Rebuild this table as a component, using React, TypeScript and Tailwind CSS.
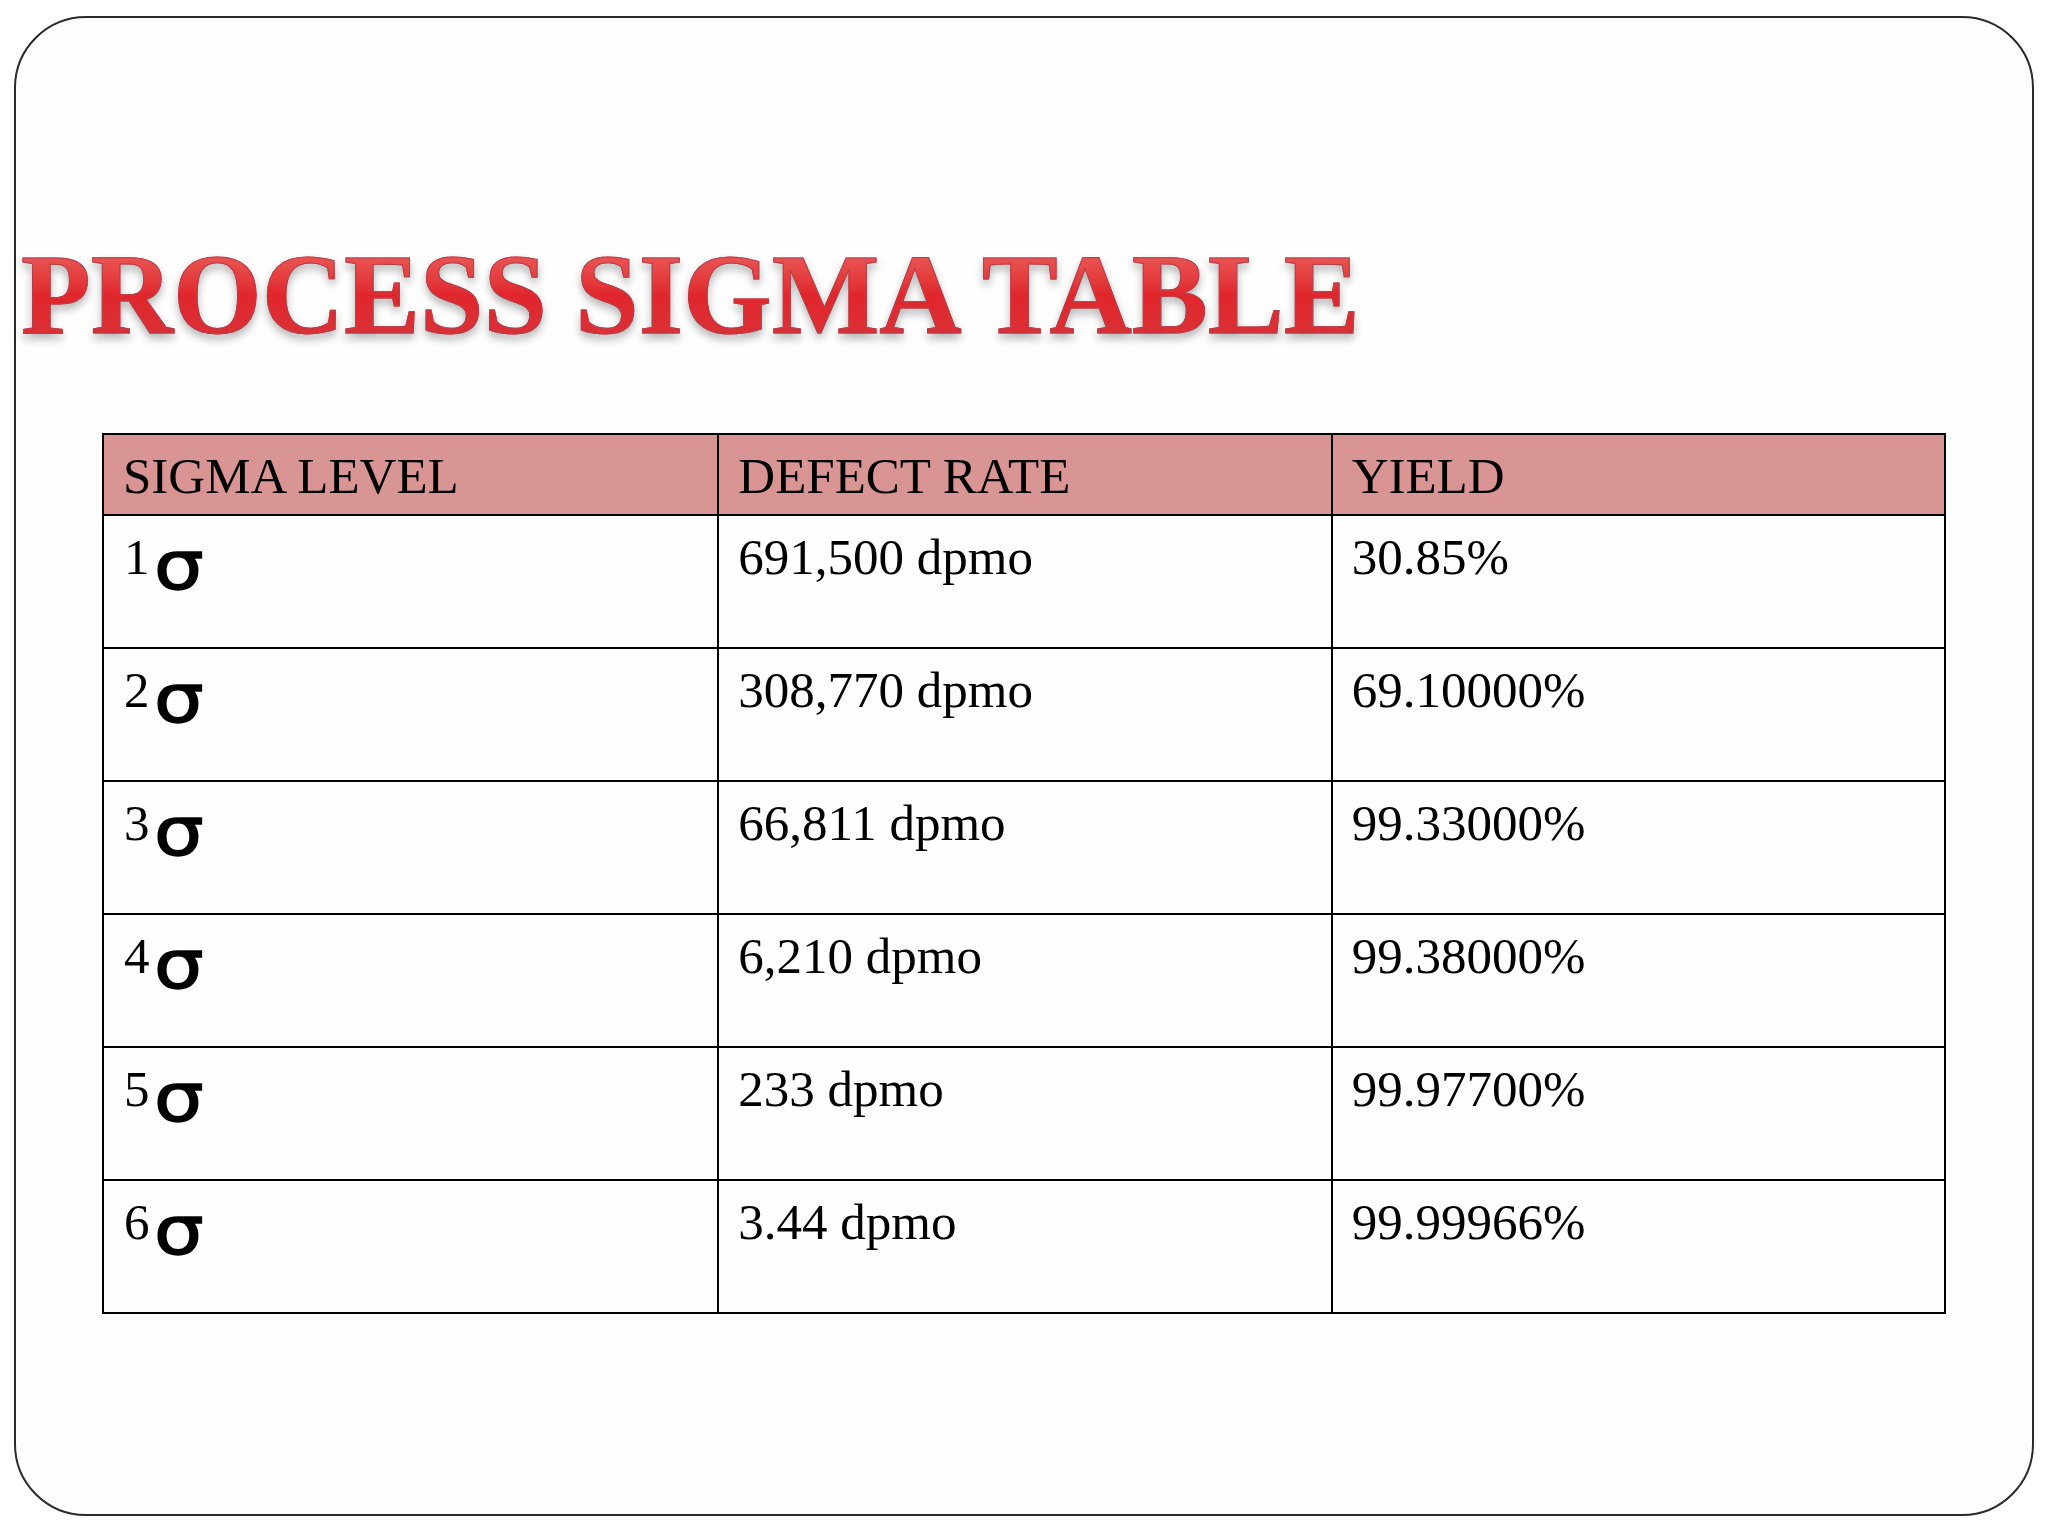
const rows = [
  { level: "1", defects: "691,500 dpmo", yieldPct: "30.85%" },
  { level: "2", defects: "308,770 dpmo", yieldPct: "69.10000%" },
  { level: "3", defects: "66,811 dpmo", yieldPct: "99.33000%" },
  { level: "4", defects: "6,210 dpmo", yieldPct: "99.38000%" },
  { level: "5", defects: "233 dpmo", yieldPct: "99.97700%" },
  { level: "6", defects: "3.44 dpmo", yieldPct: "99.99966%" },
];

const serif = "font-['Liberation_Serif','Times_New_Roman',serif]";

export default function App() {
  return (
    <div className="h-[1536px] w-[2048px] bg-white pl-[14px] pt-[16px]">
      {/* Slide frame */}
      <div className="h-[1500px] w-[2020px] rounded-[72px] border-2 border-[#2a2a2a] bg-[#fefefe]">
        {/* Title */}
        <h1
          className={`ml-[5px] mt-[220px] h-[114px] text-[114px] font-bold leading-[114px] ${serif} w-fit bg-gradient-to-b from-[#ee6464] via-[#e0262c] to-[#d8343a] bg-clip-text text-transparent [-webkit-text-stroke:1px_#b2404c] drop-shadow-[0_5px_4px_rgba(90,90,90,0.45)]`}
        >
          PROCESS SIGMA TABLE
        </h1>

        {/* Table */}
        <div className={`ml-[86px] mt-[81px] w-[1844px] border-2 border-black text-[51px] leading-[57px] text-black ${serif}`}>
          <div className="grid h-[81px] grid-cols-3 border-b-2 border-black bg-[#d99594]">
            <div className="pl-[19px] pt-[13px]">SIGMA LEVEL</div>
            <div className="border-l-2 border-black pl-[19px] pt-[13px]">DEFECT RATE</div>
            <div className="border-l-2 border-black pl-[19px] pt-[13px]">YIELD</div>
          </div>
          {rows.map((row, i) => (
            <div
              key={row.level}
              className={`grid grid-cols-3 ${i < rows.length - 1 ? "h-[133px] border-b-2 border-black" : "h-[131px]"}`}
            >
              <div className="pl-[20px] pt-[13px]">
                {row.level}
                <span className="ml-[4px] inline-block origin-left scale-x-[1.15] align-[-15px] font-['DejaVu_Sans',sans-serif] text-[68px] font-normal leading-[57px] [-webkit-text-stroke:1.5px_#000]">
                  σ
                </span>
              </div>
              <div className="border-l-2 border-black pl-[19px] pt-[13px]">{row.defects}</div>
              <div className="border-l-2 border-black pl-[19px] pt-[13px]">{row.yieldPct}</div>
            </div>
          ))}
        </div>
      </div>
    </div>
  );
}
